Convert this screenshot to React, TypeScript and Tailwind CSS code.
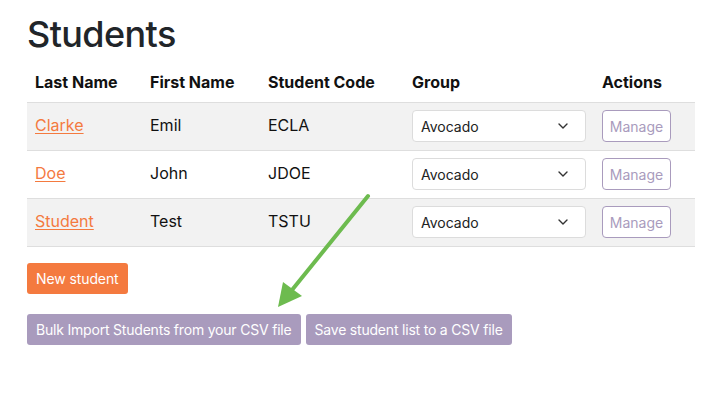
import React from 'react';

const students = [
  { last: 'Clarke', first: 'Emil', code: 'ECLA' },
  { last: 'Doe', first: 'John', code: 'JDOE' },
  { last: 'Student', first: 'Test', code: 'TSTU' },
];

function Chevron() {
  return (
    <svg width="12" height="12" viewBox="0 0 12 12" fill="none" className="text-[#333]">
      <path d="M2 4l4 4 4-4" stroke="currentColor" strokeWidth="1.4" strokeLinecap="round" strokeLinejoin="round" />
    </svg>
  );
}

export default function App() {
  return (
    <div className="relative h-[393px] w-[721px] bg-white font-['Inter',sans-serif] text-[#111]">
      <div className="px-[27px] pt-[10px] w-[695px] box-content">
        <h1 className="text-[36px] font-medium leading-[48px] tracking-[-0.6px] text-[#212529]">Students</h1>

        <table className="mt-[4px] w-[668px] border-collapse text-[16px]">
          <thead>
            <tr className="h-[40px] text-left">
              <th className="w-[115px] px-2 font-bold">Last Name</th>
              <th className="w-[118px] px-2 font-bold">First Name</th>
              <th className="w-[144px] px-2 font-bold">Student Code</th>
              <th className="w-[190px] px-2 font-bold">Group</th>
              <th className="px-2 font-bold">Actions</th>
            </tr>
          </thead>
          <tbody>
            {students.map((s, i) => (
              <tr key={s.code} className={`h-[48px] border-t border-b border-[#dedede] ${i % 2 === 0 ? 'bg-[#f2f2f2]' : 'bg-white'}`}>
                <td className="px-2 pb-[3px]">
                  <a href="#" className="text-[#f47a3f] underline underline-offset-2">{s.last}</a>
                </td>
                <td className="px-2 pb-[3px]">{s.first}</td>
                <td className="px-2 pb-[3px]">{s.code}</td>
                <td className="px-2">
                  <div className="flex h-[32px] w-[174px] items-center justify-between rounded-[4px] border border-[#dcdcdc] bg-white pl-[8px] pr-[16px] text-[14px] text-[#222]">
                    <span>Avocado</span>
                    <Chevron />
                  </div>
                </td>
                <td className="px-2">
                  <button className="h-[32px] w-[69px] rounded-[4px] border border-[#a99bbd] bg-white text-[14px] text-[#a99bbd]">
                    Manage
                  </button>
                </td>
              </tr>
            ))}
          </tbody>
        </table>

        <div className="mt-[16px]">
          <button className="h-[31px] rounded-[3px] bg-[#f47a3f] px-[9px] text-[14px] tracking-[-0.1px] text-white">New student</button>
        </div>
        <div className="mt-[20px] flex gap-[5px]">
          <button className="h-[31px] rounded-[3px] bg-[#a99bbd] px-[9px] text-[14px] tracking-[-0.2px] text-white">
            Bulk Import Students from your CSV file
          </button>
          <button className="h-[31px] rounded-[3px] bg-[#a99bbd] px-[9px] text-[14px] tracking-[-0.2px] text-white">
            Save student list to a CSV file
          </button>
        </div>
      </div>

      <svg className="pointer-events-none absolute left-0 top-0" width="721" height="393" viewBox="0 0 721 393">
        <line x1="368" y1="196" x2="292" y2="290" stroke="#6dbb4f" strokeWidth="4" strokeLinecap="round" />
        <polygon points="278,307 283,282 302,296" fill="#6dbb4f" />
      </svg>
    </div>
  );
}
